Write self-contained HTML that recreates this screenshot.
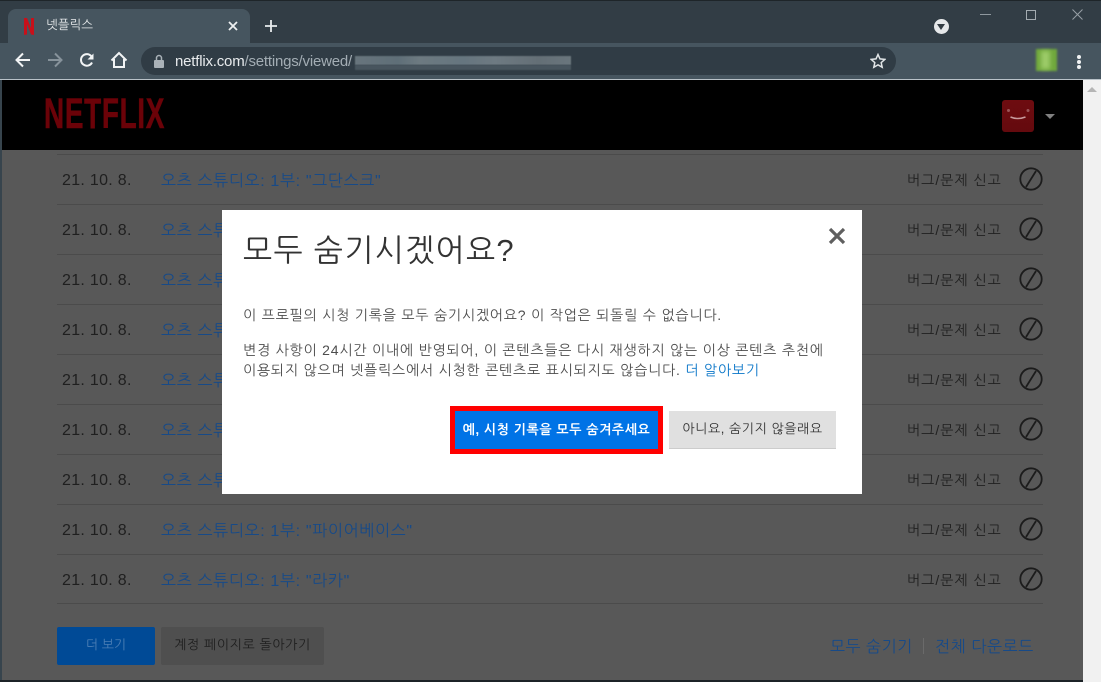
<!DOCTYPE html>
<html lang="ko"><head><meta charset="utf-8"><style>
html,body{margin:0;padding:0;width:1101px;height:682px;overflow:hidden;background:#585858}
*{box-sizing:border-box}
body{position:relative;font-family:"Liberation Sans","NanumGothic","Noto Sans CJK KR",sans-serif}
.a{position:absolute;white-space:nowrap}
.line{position:absolute;left:57px;width:986px;height:1px;background:#4b4b4b}
.date{position:absolute;left:62px;font-size:16px;line-height:20px;color:#1f1f1f;letter-spacing:.3px}
.t{position:absolute;left:161px;font-size:16px;line-height:20px;color:#174a88;white-space:nowrap;letter-spacing:.65px}
.rep{position:absolute;left:907px;font-size:14px;line-height:20px;color:#202020;white-space:nowrap;letter-spacing:1px}
.m{font-size:14px;line-height:20px;color:#4d4d4d;letter-spacing:.8px}
</style></head><body>
<!-- browser chrome -->
<div class="a" style="left:0;top:0;width:1101px;height:43px;background:#323d45;border-top:1px solid #1e2529"></div>
<div class="a" style="left:8px;top:9px;width:242px;height:34px;background:#46555f;border-radius:8px 8px 0 0"></div>
<div class="a" style="left:0;top:43px;width:1101px;height:37px;background:#46555f"></div>
<div class="a" style="left:0;top:79px;width:1101px;height:1px;background:#b9c2c8"></div>
<svg class="a" style="left:22px;top:18px" width="14" height="17" viewBox="0 0 14 17"><path d="M2 0h3l4 10V0h3v17l-3-.5L5 6v10.500L2 17z" fill="#c8101a"/></svg>
<div class="a" style="left:46px;top:17px;font-size:12.500px;line-height:17px;color:#e6e9eb">넷플릭스</div>
<svg class="a" style="left:227px;top:20px" width="12" height="12" viewBox="0 0 12 12"><path d="M2 2l8 8M10 2l-8 8" stroke="#eef0f1" stroke-width="1.800"/></svg>
<svg class="a" style="left:264px;top:19px" width="14" height="14" viewBox="0 0 14 14"><path d="M7 1v12M1 7h12" stroke="#e8ebed" stroke-width="1.800"/></svg>
<svg class="a" style="left:14px;top:51px" width="18" height="18" viewBox="0 0 18 18"><path d="M16 9H3M9 2.500L2.500 9 9 15.500" fill="none" stroke="#f2f4f5" stroke-width="2"/></svg>
<svg class="a" style="left:46px;top:51px" width="18" height="18" viewBox="0 0 18 18"><path d="M2 9h13M9 2.500L15.500 9 9 15.500" fill="none" stroke="#87939b" stroke-width="2"/></svg>
<svg class="a" style="left:78px;top:52px" width="18" height="17" viewBox="0 0 18 17"><path d="M14 10.500A5.800 5.800 0 1 1 13.500 4.500" fill="none" stroke="#f2f4f5" stroke-width="2"/><path d="M15.500 1.500v6h-6z" fill="#f2f4f5"/></svg>
<svg class="a" style="left:110px;top:51px" width="18" height="18" viewBox="0 0 18 18"><path d="M1.500 9.500L9 2l7.500 7.500M4 8v8h10V8" fill="none" stroke="#f2f4f5" stroke-width="2"/></svg>
<div class="a" style="left:141px;top:47px;width:755px;height:28px;background:#303c45;border-radius:14px"></div>
<svg class="a" style="left:153px;top:54px" width="12" height="14" viewBox="0 0 12 14"><rect x="1" y="6" width="10" height="8" rx="1" fill="#aab2b8"/><path d="M3.500 6V4a2.500 2.500 0 0 1 5 0v2" fill="none" stroke="#aab2b8" stroke-width="1.500"/></svg>
<div class="a" style="left:175px;top:53px;font-size:15px;line-height:18px;color:#e8ebed;letter-spacing:-.2px">netflix.com<span style="color:#a3adb4">/settings/viewed/</span></div>
<div class="a" style="left:355px;top:56px;width:216px;height:9px;background:linear-gradient(90deg,#68757d,#5f6f78 20%,#6d7a81 30%,#66767f 50%,#6e7a82 65%,#646f76 85%,#6a767d);filter:blur(.6px)"></div>
<div class="a" style="left:355px;top:65px;width:216px;height:5px;background:#48555e;filter:blur(.6px)"></div>
<svg class="a" style="left:870px;top:53px" width="16" height="16" viewBox="0 0 16 16"><path d="M8 1.500l2 4.400 4.800.5-3.600 3.200 1 4.700L8 11.900l-4.200 2.400 1-4.700L1.200 6.400 6 5.900z" fill="none" stroke="#e2e6e8" stroke-width="1.500"/></svg>
<div class="a" style="left:934px;top:19px;width:15px;height:15px;border-radius:50%;background:#e6e8ea"></div>
<div class="a" style="left:937px;top:24px;width:0;height:0;border:4.500px solid transparent;border-top:6px solid #333c43;border-bottom:0"></div>
<div class="a" style="left:980px;top:14px;width:11px;height:1px;background:#8f989e"></div>
<div class="a" style="left:1026px;top:10px;width:10px;height:10px;border:1px solid #a3abb0"></div>
<svg class="a" style="left:1072px;top:9px" width="11" height="11" viewBox="0 0 11 11"><path d="M.5.500l10 10M10.500.500l-10 10" stroke="#98a0a5"/></svg>
<div class="a" style="left:1036px;top:49px;width:21px;height:22px;background:#70a83c;filter:blur(1px)"></div>
<div class="a" style="left:1041px;top:51px;width:9px;height:18px;background:#9ccb68;filter:blur(2px)"></div>
<div class="a" style="left:1077px;top:55px;width:4px;height:4px;border-radius:50%;background:#f0f2f3;box-shadow:0 5px 0 #f0f2f3,0 10px 0 #f0f2f3"></div>

<!-- page -->
<div class="a" style="left:0;top:80px;width:2px;height:602px;background:#37444d"></div>
<div class="a" style="left:2px;top:80px;width:1081px;height:70px;background:#000"></div>
<div class="a" style="left:1083px;top:80px;width:18px;height:602px;background:#f1f1f1"></div>
<div class="a" style="left:1087px;top:87px;width:0;height:0;border:5px solid transparent;border-bottom:5px solid #b5b5b5;border-top:0"></div>
<div class="a" style="left:0;top:680px;width:1083px;height:2px;background:#1c2327"></div>
<div class="a" style="left:44px;top:90px;font:bold 43px/48px 'Liberation Sans',sans-serif;color:#6b0208;transform:scaleX(.65);transform-origin:0 0;letter-spacing:1px;-webkit-text-stroke:.6px #6b0208">NETFLIX</div>
<div class="a" style="left:1002px;top:100px;width:32px;height:32px;border-radius:3px;background:linear-gradient(#6e0c10,#640a0e)"></div>
<svg class="a" style="left:1002px;top:100px" width="32" height="32" viewBox="0 0 32 32"><circle cx="6.500" cy="10.500" r="1.500" fill="#9a5558"/><circle cx="26" cy="10.500" r="1.500" fill="#9a5558"/><path d="M13 17q7 3 15 0" transform="translate(-4.500 0)" fill="none" stroke="#c89a9c" stroke-width="1.500"/></svg>
<div class="a" style="left:1045px;top:114px;width:0;height:0;border:5px solid transparent;border-top:5px solid #808080;border-bottom:0"></div>

<div class="line" style="top:154px"></div>
<div class="line" style="top:204px"></div><div class="line" style="top:254px"></div><div class="line" style="top:304px"></div><div class="line" style="top:354px"></div><div class="line" style="top:404px"></div><div class="line" style="top:454px"></div><div class="line" style="top:504px"></div><div class="line" style="top:554px"></div><div class="line" style="top:603px"></div>

<div class="date" style="top:171px">21. 10. 8.</div><a class="t" style="top:172px">오츠 스튜디오: 1부: "그단스크"</a><div class="rep" style="top:170px">버그/문제 신고</div>
<div class="date" style="top:221px">21. 10. 8.</div><a class="t" style="top:222px">오츠 스튜디오: 1부</a><div class="rep" style="top:220px">버그/문제 신고</div>
<div class="date" style="top:271px">21. 10. 8.</div><a class="t" style="top:272px">오츠 스튜디오: 1부</a><div class="rep" style="top:270px">버그/문제 신고</div>
<div class="date" style="top:321px">21. 10. 8.</div><a class="t" style="top:322px">오츠 스튜디오: 1부</a><div class="rep" style="top:320px">버그/문제 신고</div>
<div class="date" style="top:371px">21. 10. 8.</div><a class="t" style="top:372px">오츠 스튜디오: 1부</a><div class="rep" style="top:370px">버그/문제 신고</div>
<div class="date" style="top:421px">21. 10. 8.</div><a class="t" style="top:422px">오츠 스튜디오: 1부</a><div class="rep" style="top:420px">버그/문제 신고</div>
<div class="date" style="top:471px">21. 10. 8.</div><a class="t" style="top:472px">오츠 스튜디오: 1부</a><div class="rep" style="top:470px">버그/문제 신고</div>
<div class="date" style="top:521px">21. 10. 8.</div><a class="t" style="top:522px">오츠 스튜디오: 1부: "파이어베이스"</a><div class="rep" style="top:520px">버그/문제 신고</div>
<div class="date" style="top:571px">21. 10. 8.</div><a class="t" style="top:572px">오츠 스튜디오: 1부: "라카"</a><div class="rep" style="top:570px">버그/문제 신고</div>

<svg class="a" style="left:1019px;top:167px" width="25" height="425" viewBox="0 0 25 425" fill="none" stroke="#1c1c1c" stroke-width="1.800">
<g><circle cx="12" cy="12" r="10.700"/><path d="M17 4L7 20"/></g>
<g transform="translate(0 50)"><circle cx="12" cy="12" r="10.700"/><path d="M17 4L7 20"/></g>
<g transform="translate(0 100)"><circle cx="12" cy="12" r="10.700"/><path d="M17 4L7 20"/></g>
<g transform="translate(0 150)"><circle cx="12" cy="12" r="10.700"/><path d="M17 4L7 20"/></g>
<g transform="translate(0 200)"><circle cx="12" cy="12" r="10.700"/><path d="M17 4L7 20"/></g>
<g transform="translate(0 250)"><circle cx="12" cy="12" r="10.700"/><path d="M17 4L7 20"/></g>
<g transform="translate(0 300)"><circle cx="12" cy="12" r="10.700"/><path d="M17 4L7 20"/></g>
<g transform="translate(0 350)"><circle cx="12" cy="12" r="10.700"/><path d="M17 4L7 20"/></g>
<g transform="translate(0 400)"><circle cx="12" cy="12" r="10.700"/><path d="M17 4L7 20"/></g>
</svg>

<div class="a" style="left:57px;top:627px;width:98px;height:38px;background:#004a96;border-radius:2px;text-align:center;font-size:13px;line-height:36px;color:#4c7fb5">더 보기</div>
<div class="a" style="left:161px;top:627px;width:163px;height:38px;background:#4f4f4f;border-radius:2px;text-align:center;font-size:13px;line-height:36px;color:#1e1e1e;letter-spacing:.6px">계정 페이지로 돌아가기</div>
<div class="a" style="left:830px;top:638px;font-size:16px;line-height:20px;color:#174a88;letter-spacing:.5px">모두 숨기기</div>
<div class="a" style="left:923px;top:638px;width:1px;height:16px;background:#6a6a6a"></div>
<div class="a" style="left:935px;top:638px;font-size:16px;line-height:20px;color:#174a88;letter-spacing:.6px">전체 다운로드</div>

<!-- modal -->
<div class="a" style="left:222px;top:210px;width:640px;height:284px;background:#fff"></div>
<div class="a" style="left:243px;top:232px;font-size:31px;line-height:38px;color:#333;letter-spacing:1.300px">모두 숨기시겠어요?</div>
<svg class="a" style="left:828px;top:227px" width="18" height="18" viewBox="0 0 18 18"><path d="M2 2l14 14M16 2L2 16" stroke="#5f5f5f" stroke-width="3.200"/></svg>
<div class="a m" style="left:243px;top:305px">이 프로필의 시청 기록을 모두 숨기시겠어요? 이 작업은 되돌릴 수 없습니다.</div>
<div class="a m" style="left:243px;top:340px">변경 사항이 24시간 이내에 반영되어, 이 콘텐츠들은 다시 재생하지 않는 이상 콘텐츠 추천에</div>
<div class="a m" style="left:243px;top:360px">이용되지 않으며 넷플릭스에서 시청한 콘텐츠로 표시되지도 않습니다. <span style="color:#0a76c8">더 알아보기</span></div>
<div class="a" style="left:450px;top:406px;width:213px;height:48px;background:#ff0000"></div>
<div class="a" style="left:455px;top:411px;width:203px;height:38px;background:#0073e6;text-align:center;font-size:13px;font-weight:bold;line-height:37px;color:#fff;letter-spacing:.6px">예, 시청 기록을 모두 숨겨주세요</div>
<div class="a" style="left:669px;top:411px;width:167px;height:38px;background:#e0e0e0;border-bottom:1px solid #ccc;text-align:center;font-size:13px;line-height:36px;color:#333;letter-spacing:.55px">아니요, 숨기지 않을래요</div>
</body></html>
